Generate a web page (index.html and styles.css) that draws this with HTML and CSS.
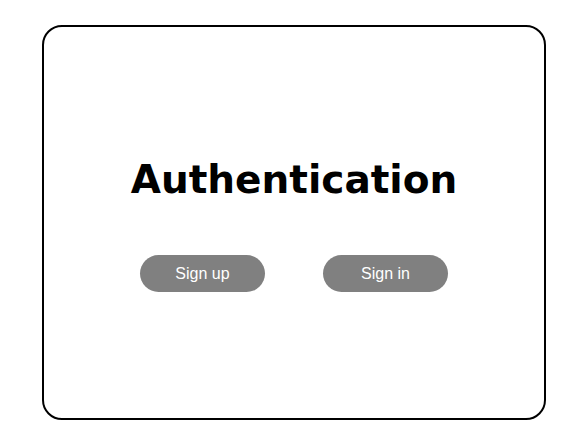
FILE: index.html
```html
<!DOCTYPE html>
<html>
<head>
<meta charset="utf-8">
<link rel="stylesheet" href="styles.css">
</head>
<body>
<div class="card">
  <h1 class="title">Authentication</h1>
  <div class="actions">
    <button class="btn">Sign up</button>
    <button class="btn">Sign in</button>
  </div>
</div>
</body>
</html>
```
FILE: styles.css
```css
html, body {
  margin: 0;
  padding: 0;
  background: #fff;
}
body {
  padding: 25px 0 0 42px;
}
.card {
  box-sizing: border-box;
  width: 504px;
  height: 395px;
  border: 2px solid #000;
  border-radius: 20px;
  display: flex;
  flex-direction: column;
  align-items: center;
  justify-content: center;
  padding-top: 4px;
}
.title {
  margin: 0;
  font-family: "DejaVu Sans", Verdana, sans-serif;
  font-weight: bold;
  font-size: 39px;
  line-height: 46px;
  color: #000;
}
.actions {
  display: flex;
  gap: 58px;
  margin-top: 52px;
}
.btn {
  width: 125px;
  height: 37px;
  border: none;
  border-radius: 19px;
  background: #808080;
  color: #fff;
  font-family: "Liberation Sans", Arial, sans-serif;
  font-size: 16px;
  padding: 0;
}
```
